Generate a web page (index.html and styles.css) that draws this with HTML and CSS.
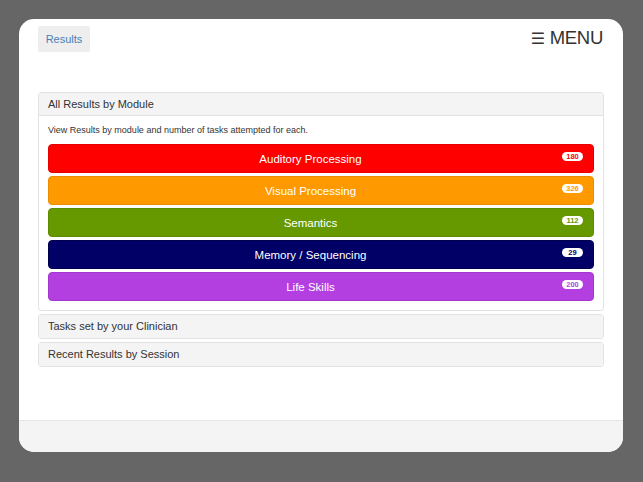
FILE: index.html
```html
<!DOCTYPE html>
<html>
<head>
<meta charset="utf-8">
<link rel="stylesheet" href="styles.css">
</head>
<body>
<div class="device">
  <header class="topbar">
    <a class="tab">Results</a>
    <div class="menu"><span class="burger">&#9776;</span> MENU</div>
  </header>
  <main class="content">
    <section class="panel open">
      <div class="panel-heading">All Results by Module</div>
      <div class="panel-body">
        <p class="desc">View Results by module and number of tasks attempted for each.</p>
        <div class="modules">
          <div class="module red"><span class="label">Auditory Processing</span><span class="badge">180</span></div>
          <div class="module orange"><span class="label">Visual Processing</span><span class="badge">326</span></div>
          <div class="module green"><span class="label">Semantics</span><span class="badge">112</span></div>
          <div class="module navy"><span class="label">Memory / Sequencing</span><span class="badge">29</span></div>
          <div class="module purple"><span class="label">Life Skills</span><span class="badge">200</span></div>
        </div>
      </div>
    </section>
    <section class="panel">
      <div class="panel-heading">Tasks set by your Clinician</div>
    </section>
    <section class="panel">
      <div class="panel-heading">Recent Results by Session</div>
    </section>
  </main>
  <footer class="footer"></footer>
</div>
</body>
</html>
```
FILE: styles.css
```css
html, body {
  margin: 0;
  padding: 0;
  background: #666666;
  font-family: "Liberation Sans", Arial, sans-serif;
  color: #333;
}
.device {
  margin: 19px 0 0 19px;
  width: 604px;
  height: 433px;
  background: #fff;
  border-radius: 15px;
  overflow: hidden;
  display: flex;
  flex-direction: column;
}
.topbar {
  display: flex;
  justify-content: space-between;
  align-items: flex-start;
  padding: 7px 20px 0 19px;
  height: 66px;
}
.tab {
  display: flex;
  align-items: center;
  justify-content: center;
  width: 52px;
  height: 26px;
  background: #eeeeee;
  border-radius: 2px;
  color: #4a7eb3;
  font-size: 11px;
}
.menu {
  margin-top: 0;
  font-size: 18.5px;
  color: #333;
  letter-spacing: -0.3px;
  line-height: 24px;
}
.burger {
  font-family: "DejaVu Sans", sans-serif;
  font-size: 16px;
}
.content {
  flex: 1;
  padding: 0 19px;
  display: flex;
  flex-direction: column;
  gap: 3px;
}
.panel {
  border: 1px solid #e3e3e3;
  border-radius: 3px;
  background: #fff;
}
.panel-heading {
  background: #f4f4f4;
  height: 23px;
  line-height: 23px;
  padding: 0 9px;
  font-size: 11px;
  color: #333;
}
.open .panel-heading {
  height: 22px;
  line-height: 22px;
  border-bottom: 1px solid #e3e3e3;
}
.panel-body {
  padding: 9px 9px 9px 9px;
}
.desc {
  margin: 0 0 9px 0;
  font-size: 9px;
  line-height: 10px;
  color: #333;
}
.modules {
  display: flex;
  flex-direction: column;
  gap: 3px;
}
.module {
  position: relative;
  height: 27px;
  border: 1px solid;
  border-radius: 4px;
  display: flex;
  align-items: center;
  justify-content: center;
  padding-right: 21px;
  color: #fff;
  font-size: 11.5px;
}
.label {
  margin-top: 1px;
}
.badge {
  position: absolute;
  right: 10px;
  top: 7px;
  min-width: 13px;
  height: 9px;
  line-height: 9px;
  padding: 0 4px;
  background: #fff;
  border-radius: 5px;
  font-size: 7.5px;
  font-weight: bold;
  text-align: center;
}
.red { background: #ff0000; border-color: #e60000; }
.red .badge { color: #ff0000; }
.orange { background: #ff9900; border-color: #ec8c00; }
.orange .badge { color: #ff9900; }
.green { background: #669900; border-color: #5c8a00; }
.green .badge { color: #669900; }
.navy { background: #000066; border-color: #00004d; }
.navy .badge { color: #000066; }
.purple { background: #b33fe0; border-color: #a236cf; }
.purple .badge { color: #b33fe0; }
.footer {
  height: 31px;
  background: #f4f4f4;
  border-top: 1px solid #e5e5e5;
}
```
